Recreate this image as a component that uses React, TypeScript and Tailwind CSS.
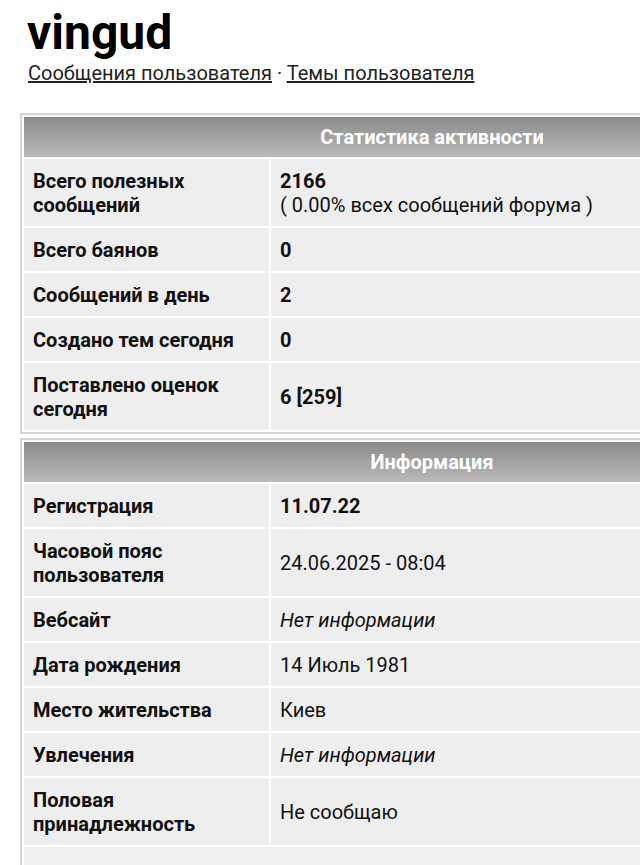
import React from 'react';

type Row = { label: string; value: React.ReactNode };

const STATS: Row[] = [
  {
    label: 'Всего полезных сообщений',
    value: (
      <>
        <span className="font-bold">2166</span>
        <br />( 0.00% всех сообщений форума )
      </>
    ),
  },
  { label: 'Всего баянов', value: <span className="font-bold">0</span> },
  { label: 'Сообщений в день', value: <span className="font-bold">2</span> },
  { label: 'Создано тем сегодня', value: <span className="font-bold">0</span> },
  { label: 'Поставлено оценок сегодня', value: <span className="font-bold">6 [259]</span> },
];

const INFO: Row[] = [
  { label: 'Регистрация', value: <span className="font-bold">11.07.22</span> },
  { label: 'Часовой пояс пользователя', value: '24.06.2025 - 08:04' },
  { label: 'Вебсайт', value: <i>Нет информации</i> },
  { label: 'Дата рождения', value: '14 Июль 1981' },
  { label: 'Место жительства', value: 'Киев' },
  { label: 'Увлечения', value: <i>Нет информации</i> },
  { label: 'Половая принадлежность', value: 'Не сообщаю' },
];

const Section: React.FC<{ title: string; rows: Row[]; tail?: boolean }> = ({ title, rows, tail }) => (
  <table className="w-[824px] border-2 border-[#d6d6d6] bg-white border-separate border-spacing-[2px] text-[20px] leading-6 text-[#111]">
    <tbody>
      <tr>
        <th
          colSpan={2}
          className="h-[40px] py-2 text-center font-bold text-white bg-gradient-to-b from-[#8a8a8a] to-[#bababa]"
        >
          {title}
        </th>
      </tr>
      {rows.map(r => (
        <tr key={r.label}>
          <td className="w-[245px] bg-[#eeeeee] pt-[10px] pb-[9px] pl-[9px] pr-2 align-middle font-bold">{r.label}</td>
          <td className="bg-[#eeeeee] pt-[10px] pb-[9px] pl-[9px] align-middle">{r.value}</td>
        </tr>
      ))}
      {tail && (
        <tr>
          <td colSpan={2} className="h-[44px] bg-[#f0f0f0]"></td>
        </tr>
      )}
    </tbody>
  </table>
);

export default function App() {
  return (
    <div className="w-[640px] h-[865px] overflow-hidden bg-white font-['Roboto',sans-serif]">
      <div className="pl-[20px] pt-[5px]">
        <h1 className="pl-[7px] text-[48px] leading-[56px] font-bold text-black">vingud</h1>
        <div className="pl-[8px] text-[20px] leading-6 text-[#222]">
          <a href="#" className="underline">Сообщения пользователя</a>
          <span> · </span>
          <a href="#" className="underline">Темы пользователя</a>
        </div>
        <div className="mt-[28px] flex flex-col gap-[4px]">
          <Section title="Статистика активности" rows={STATS} />
          <Section title="Информация" rows={INFO} tail />
        </div>
      </div>
    </div>
  );
}
